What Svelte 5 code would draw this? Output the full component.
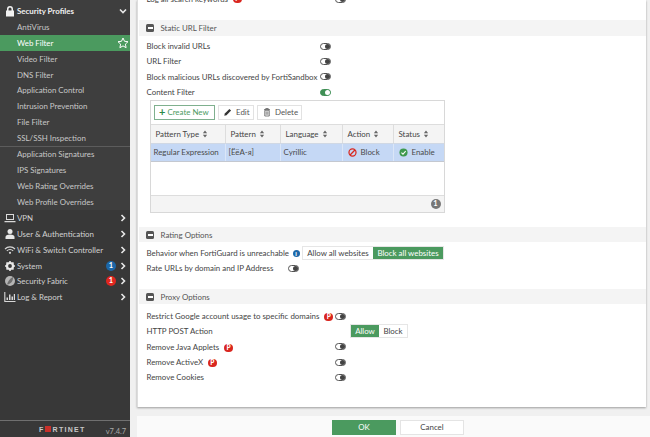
<script>
  const profiles = ['AntiVirus', 'Web Filter', 'Video Filter', 'DNS Filter', 'Application Control', 'Intrusion Prevention', 'File Filter', 'SSL/SSH Inspection'];
  const sigs = ['Application Signatures', 'IPS Signatures', 'Web Rating Overrides', 'Web Profile Overrides'];
  const cols = [
    ['Pattern Type', 'c1'], ['Pattern', 'c2'], ['Language', 'c3'], ['Action', 'c4'], ['Status', 'c5']
  ];
</script>

<div class="page">
  <aside class="side">
    <div class="nav top">
      <div class="row head">
        <svg class="ic" viewBox="0 0 12 12"><path d="M3 5.500V4a3 3 0 0 1 6 0v1.500h1v6H2v-6zM4.500 5.500h3V4a1.500 1.500 0 0 0-3 0z" fill="#f2f2f2" fill-rule="evenodd"/></svg>
        <span class="lbl strong">Security Profiles</span>
        <svg class="chev" viewBox="0 0 8 8"><path d="M1 2.500l3 3 3-3" fill="none" stroke="#e8e8e8" stroke-width="1.600"/></svg>
      </div>
      {#each profiles as p}
        <div class="row" class:active={p === 'Web Filter'}>
          <span class="lbl">{p}</span>
          {#if p === 'Web Filter'}
            <svg class="star" viewBox="0 0 12 12"><path d="M6 1l1.500 3.300 3.500.4-2.600 2.400.7 3.600L6 8.900l-3.100 1.800.7-3.600L1 4.700l3.500-.4z" fill="none" stroke="#fff" stroke-width="1"/></svg>
          {/if}
        </div>
      {/each}
      <div class="sep"></div>
      {#each sigs as p}
        <div class="row"><span class="lbl">{p}</span></div>
      {/each}
    </div>
    <div class="nav lower">
      <div class="row">
        <svg class="ic" viewBox="0 0 12 12"><path d="M2 2h8v6H2zM3 3v4h6V3zM.5 9h11v1.200H.5z" fill="#d8d8d8" fill-rule="evenodd"/></svg>
        <span class="lbl">VPN</span>
        <svg class="chev" viewBox="0 0 8 8"><path d="M2.500 1l3 3-3 3" fill="none" stroke="#e8e8e8" stroke-width="1.600"/></svg>
      </div>
      <div class="row">
        <svg class="ic" viewBox="0 0 12 12"><circle cx="6" cy="3.500" r="2.500" fill="#e8e8e8"/><path d="M1.500 11V9c0-1.500 1.500-2.500 4.500-2.500s4.500 1 4.500 2.500v2z" fill="#e8e8e8"/></svg>
        <span class="lbl">User &amp; Authentication</span>
        <svg class="chev" viewBox="0 0 8 8"><path d="M2.500 1l3 3-3 3" fill="none" stroke="#e8e8e8" stroke-width="1.600"/></svg>
      </div>
      <div class="row">
        <svg class="ic" viewBox="0 0 12 12"><path d="M1 5a7 7 0 0 1 10 0M2.800 6.800a4.500 4.500 0 0 1 6.400 0" fill="none" stroke="#d8d8d8" stroke-width="1.100"/><circle cx="6" cy="8.800" r="1.100" fill="#d8d8d8"/></svg>
        <span class="lbl">WiFi &amp; Switch Controller</span>
        <svg class="chev" viewBox="0 0 8 8"><path d="M2.500 1l3 3-3 3" fill="none" stroke="#e8e8e8" stroke-width="1.600"/></svg>
      </div>
      <div class="row">
        <svg class="ic" viewBox="0 0 12 12"><circle cx="6" cy="6" r="3" fill="none" stroke="#e8e8e8" stroke-width="2.200"/><path d="M6 1v2M6 9v2M1 6h2M9 6h2M2.500 2.500l1.400 1.400M8.100 8.100l1.400 1.400M9.500 2.500L8.100 3.900M3.900 8.100L2.500 9.500" stroke="#e8e8e8" stroke-width="1.600"/></svg>
        <span class="lbl">System</span>
        <span class="badge blue">1</span>
        <svg class="chev" viewBox="0 0 8 8"><path d="M2.500 1l3 3-3 3" fill="none" stroke="#e8e8e8" stroke-width="1.600"/></svg>
      </div>
      <div class="row">
        <svg class="ic" viewBox="0 0 12 12"><circle cx="6" cy="6" r="5" fill="#b5b5b5"/><path d="M3 9.500C4 6 6 3.500 9 2c.5 3-1.500 7-6 7.500z" fill="#707070"/></svg>
        <span class="lbl">Security Fabric</span>
        <span class="badge red">1</span>
        <svg class="chev" viewBox="0 0 8 8"><path d="M2.500 1l3 3-3 3" fill="none" stroke="#e8e8e8" stroke-width="1.600"/></svg>
      </div>
      <div class="row">
        <svg class="ic" viewBox="0 0 12 12"><path d="M.8 1v9.500H11.500" fill="none" stroke="#d8d8d8" stroke-width="1.100"/><path d="M2.500 9V6.500h1.500V9zM5 9V3.500h1.500V9zM7.500 9V5.500H9V9zM9.800 9V3h1.200v6z" fill="#d8d8d8"/></svg>
        <span class="lbl">Log &amp; Report</span>
        <svg class="chev" viewBox="0 0 8 8"><path d="M2.500 1l3 3-3 3" fill="none" stroke="#e8e8e8" stroke-width="1.600"/></svg>
      </div>
    </div>
    <div class="brand">
      <span class="logo">F<span class="logo-o"></span>RTINET</span>
      <span class="ver">v7.4.7</span>
    </div>
  </aside>

  <main class="main">
    <div class="card">
      <div class="frow clipped">
        <span>Log all search keywords</span><span class="p small">P</span>
        <span class="sw off at2"></span>
      </div>

      <div class="section first">
        <span class="minus"></span><span>Static URL Filter</span>
      </div>
      <div class="frow"><span class="w1">Block invalid URLs</span><span class="sw off"></span></div>
      <div class="frow"><span class="w1">URL Filter</span><span class="sw off"></span></div>
      <div class="frow"><span class="w1">Block malicious URLs discovered by FortiSandbox</span><span class="sw off"></span></div>
      <div class="frow"><span class="w1">Content Filter</span><span class="sw on"></span></div>

      <div class="tbl">
        <div class="toolbar">
          <span class="btn create"><b>+</b>Create New</span>
          <span class="btn edit">
            <svg class="bi" viewBox="0 0 12 12"><path d="M1.500 10.500l.7-2.700 5.500-5.500 2 2-5.500 5.500z" fill="#333"/></svg>Edit
          </span>
          <span class="btn del">
            <svg class="bi" viewBox="0 0 12 12"><path d="M2.500 3h7M4.500 3V1.800h3V3M3.300 4v6.800h5.400V4zM5 5.200v4.200M7 5.200v4.200" fill="none" stroke="#555" stroke-width=".9"/></svg>Delete
          </span>
        </div>
        <div class="thead">
          {#each cols as c}
            <div class="th {c[1]}">{c[0]}
              <svg class="sort" viewBox="0 0 7 9"><path d="M3.500.5L6 3.500H1zM3.500 8.500L1 5.500h5z" fill="#666"/></svg>
            </div>
          {/each}
        </div>
        <div class="tr">
          <div class="c1 td">Regular Expression</div>
          <div class="c2 td">[ЁёА-я]</div>
          <div class="c3 td">Cyrillic</div>
          <div class="c4 td">
            <svg class="si" viewBox="0 0 10 10"><circle cx="5" cy="5" r="3.900" fill="none" stroke="#d8281f" stroke-width="1.400"/><path d="M2.300 7.700l5.400-5.400" stroke="#d8281f" stroke-width="1.400"/></svg>Block
          </div>
          <div class="c5 td">
            <svg class="si" viewBox="0 0 10 10"><circle cx="5" cy="5" r="4.500" fill="#3f9a4f"/><path d="M2.700 5.200l1.700 1.600 3-3.200" fill="none" stroke="#fff" stroke-width="1.200"/></svg>Enable
          </div>
        </div>
        <div class="tempty"></div>
        <div class="tfoot"><span class="count">1</span></div>
      </div>

      <div class="section rating">
        <span class="minus"></span><span>Rating Options</span>
      </div>
      <div class="frow behav">
        <span class="w5">Behavior when FortiGuard is unreachable</span>
        <span class="info">i</span>
        <span class="seg">
          <span class="opt wa">Allow all websites</span>
          <span class="opt sel wb">Block all websites</span>
        </span>
      </div>
      <div class="frow"><span class="w2">Rate URLs by domain and IP Address</span><span class="sw off"></span></div>

      <div class="section proxy">
        <span class="minus"></span><span>Proxy Options</span>
      </div>
      <div class="frow"><span class="w3">Restrict Google account usage to specific domains<span class="p">P</span></span><span class="sw off"></span></div>
      <div class="frow">
        <span class="w4">HTTP POST Action</span>
        <span class="seg">
          <span class="opt sel wc">Allow</span>
          <span class="opt wc">Block</span>
        </span>
      </div>
      <div class="frow"><span class="w3">Remove Java Applets<span class="p">P</span></span><span class="sw off"></span></div>
      <div class="frow"><span class="w3">Remove ActiveX<span class="p">P</span></span><span class="sw off"></span></div>
      <div class="frow"><span class="w3">Remove Cookies</span><span class="sw off"></span></div>
    </div>
    <footer class="foot">
      <span class="fbtn ok">OK</span>
      <span class="fbtn">Cancel</span>
    </footer>
  </main>
</div>

<style>
  :global(body) { margin: 0; }
  .page {
    width: 650px; height: 437px; overflow: hidden; display: flex;
    font-family: Lato, "Liberation Sans", sans-serif; font-size: 7.900px; color: #444;
    background: #f0f0f0;
  }
  .side { width: 130px; flex: none; height: 437px; background: #383838; display: flex; flex-direction: column; color: #ddd; }
  .nav.top { padding-top: 3px; background: #3e3e3e; }
  .nav.lower { flex: 1; background: #383838; }
  .row { height: 15.900px; display: flex; align-items: center; padding-left: 17px; position: relative; color: #c8c8c8; }
  .nav.lower .row { color: #d2d2d2; }
  .row.head { color: #f0f0f0; }
  .strong { font-weight: 700; }
  .row.active { background: #4b9a5f; color: #fff; }
  .lbl { white-space: nowrap; }
  .ic { position: absolute; left: 4px; top: 2px; width: 12px; height: 12px; }
  .chev { position: absolute; left: 119px; top: 4px; width: 8px; height: 8px; }
  .star { position: absolute; left: 117px; top: 2px; width: 12px; height: 12px; }
  .sep { height: 1px; background: #5c5c5c; margin-bottom: -.7px; }
  .badge {
    position: absolute; left: 106px; top: 3px; width: 10px; height: 10px; border-radius: 50%;
    color: #fff; font-size: 7.500px; font-weight: 700; line-height: 10px; text-align: center;
  }
  .badge.blue { background: #1c67a8; }
  .badge.red { background: #e0261f; }
  .brand { height: 16px; border-top: 1px solid #707070; display: flex; align-items: center; padding-left: 39px; gap: 20px; }
  .logo { font-family: "Liberation Sans", sans-serif; font-weight: 700; font-size: 7px; letter-spacing: 1.300px; color: #c8c8c8; display: flex; align-items: center; }
  .logo-o { width: 6px; height: 6px; background: #c8302a; margin: 0 1.500px 0 .5px; }
  .ver { font-size: 7.500px; color: #a8a8a8; padding-top: 5px; }

  .main { flex: 1; display: flex; flex-direction: column; padding-left: 7px; min-width: 0; }
  .card {
    width: 509px; height: 407px; background: #fff; box-sizing: border-box; flex: none;
    box-shadow: 0 1px 2px rgba(0,0,0,.35); border-left: 1px solid #ddd;
    padding: 0 0 0 1px;
    overflow: hidden;
  }
  .section {
    height: 15.500px; background: #f4f4f4; display: flex; align-items: center; gap: 6.500px;
    padding-left: 7px; color: #555;
  }
  .section.first { margin-top: 11px; margin-bottom: 3px; }
  .section.rating { margin-top: 14px; margin-bottom: 4px; }
  .section.proxy { margin-top: 13px; margin-bottom: 4px; }
  .minus { width: 8px; height: 8px; background: #555; border-radius: 1.500px; position: relative; flex: none; }
  .minus::after { content: ''; position: absolute; left: 1.500px; right: 1.500px; top: 3px; height: 2px; background: #fff; }
  .frow { height: 15.330px; display: flex; align-items: center; padding-left: 7.500px; white-space: nowrap; }
  .frow.clipped { height: 20px; margin-top: -11px; }
  .frow.behav { height: 14.300px; }
  .w1 { width: 173.500px; flex: none; }
  .w2 { width: 141.500px; flex: none; }
  .w3 { width: 188.500px; flex: none; }
  .w4 { width: 203.500px; flex: none; }
  .w5 { width: 144px; flex: none; }
  .sw { width: 9px; height: 5px; border-radius: 4px; background: #fff; border: 1px solid #555; position: relative; display: inline-block; flex: none; }
  .sw::after { content: ''; position: absolute; top: 0; width: 5px; height: 5px; border-radius: 50%; }
  .sw.off::after { right: 0; background: #444; }
  .sw.on { border-color: #3f8f55; background: #3f8f55; }
  .sw.on::after { right: 0; background: #fff; }
  .at2 { margin-left: 93px; }
  .p {
    display: inline-block; width: 8.500px; height: 8.500px; border-radius: 50%; background: #d9261f;
    color: #fff; font-size: 6.500px; font-weight: 900; line-height: 8.500px; text-align: center; margin-left: 5px; vertical-align: 0;
  }
  .p.small { margin-left: 5px; }
  .tbl {
    width: 295px; margin: 0 0 0 10.500px; box-sizing: border-box; border: 1px solid #d8d8d8; display: flex; flex-direction: column;
  }
  .toolbar { height: 23px; display: flex; align-items: center; gap: 3px; padding-left: 3.500px; }
  .btn {
    height: 14.500px; box-sizing: border-box; display: flex; align-items: center; gap: 3px; border: 1px solid #e2e2e2;
    color: #555; background: #fff; padding-left: 4px;
  }
  .btn.create { width: 61px; border-color: #7fb08e; color: #4d9a63; gap: 2px; }
  .btn.edit { width: 36px; }
  .btn.del { width: 45px; }
  .btn b { font-size: 11px; line-height: 10px; color: #2f8a47; }
  .bi { width: 10px; height: 10px; }
  .thead { height: 19px; display: flex; background: #f4f4f4; border-top: 1px solid #ddd; box-sizing: border-box; }
  .th { display: flex; align-items: center; gap: 3px; padding-left: 5px; box-sizing: border-box; border-right: 1px solid #ddd; white-space: nowrap; }
  .sort { width: 6px; height: 8px; }
  .c1 { width: 75px; flex: none; }
  .c2 { width: 55px; flex: none; }
  .c3 { width: 62px; flex: none; }
  .c4 { width: 51px; flex: none; }
  .c5 { flex: 1; border-right: none; }
  .tr { height: 19px; display: flex; background: #c5d8f5; border-top: 1px solid #d0d8e4; border-bottom: 1px solid #c4c8d0; box-sizing: border-box; }
  .td { display: flex; align-items: center; padding-left: 3px; box-sizing: border-box; gap: 4px; white-space: nowrap; border-right: 1px solid #dbe6f7; color: #4a4a4a; }
  .td.c5 { border-right: none; padding-left: 5px; }
  .td.c4 { padding-left: 5px; }
  .si { width: 9px; height: 9px; }
  .tempty { height: 33px; }
  .tfoot { height: 16px; background: #f4f4f4; border-top: 1px solid #ddd; display: flex; align-items: center; justify-content: flex-end; padding-right: 3px; }
  .count { width: 10px; height: 10px; border-radius: 50%; background: #777; color: #fff; font-size: 7.500px; font-weight: 700; text-align: center; line-height: 10px; }
  .info { width: 7px; height: 7px; border-radius: 50%; background: #1c67a8; color: #fff; font-size: 6px; font-weight: 900; text-align: center; line-height: 7px; margin: 0 2.500px 0 2px; flex: none; }
  .seg { display: flex; flex: none; height: 12px; border: 1px solid #e6e6e6; }
  .opt { display: flex; align-items: center; justify-content: center; color: #444; }
  .opt.sel { background: #4b9a5f; color: #fff; }
  .wa { width: 70px; }
  .wb { width: 70px; }
  .wc { width: 28px; }
  .foot { margin-top: 9px; flex: 1; display: flex; justify-content: center; gap: 4px; padding: 4px 0 0 9px; background: #fafafa; }
  .fbtn {
    width: 64px; height: 14.500px; box-sizing: border-box; border: 1px solid #e4e4e4; background: #fff; text-align: center; line-height: 12.500px;
  }
  .fbtn.ok { background: #4b9a5f; color: #fff; border-color: #4b9a5f; }
</style>
